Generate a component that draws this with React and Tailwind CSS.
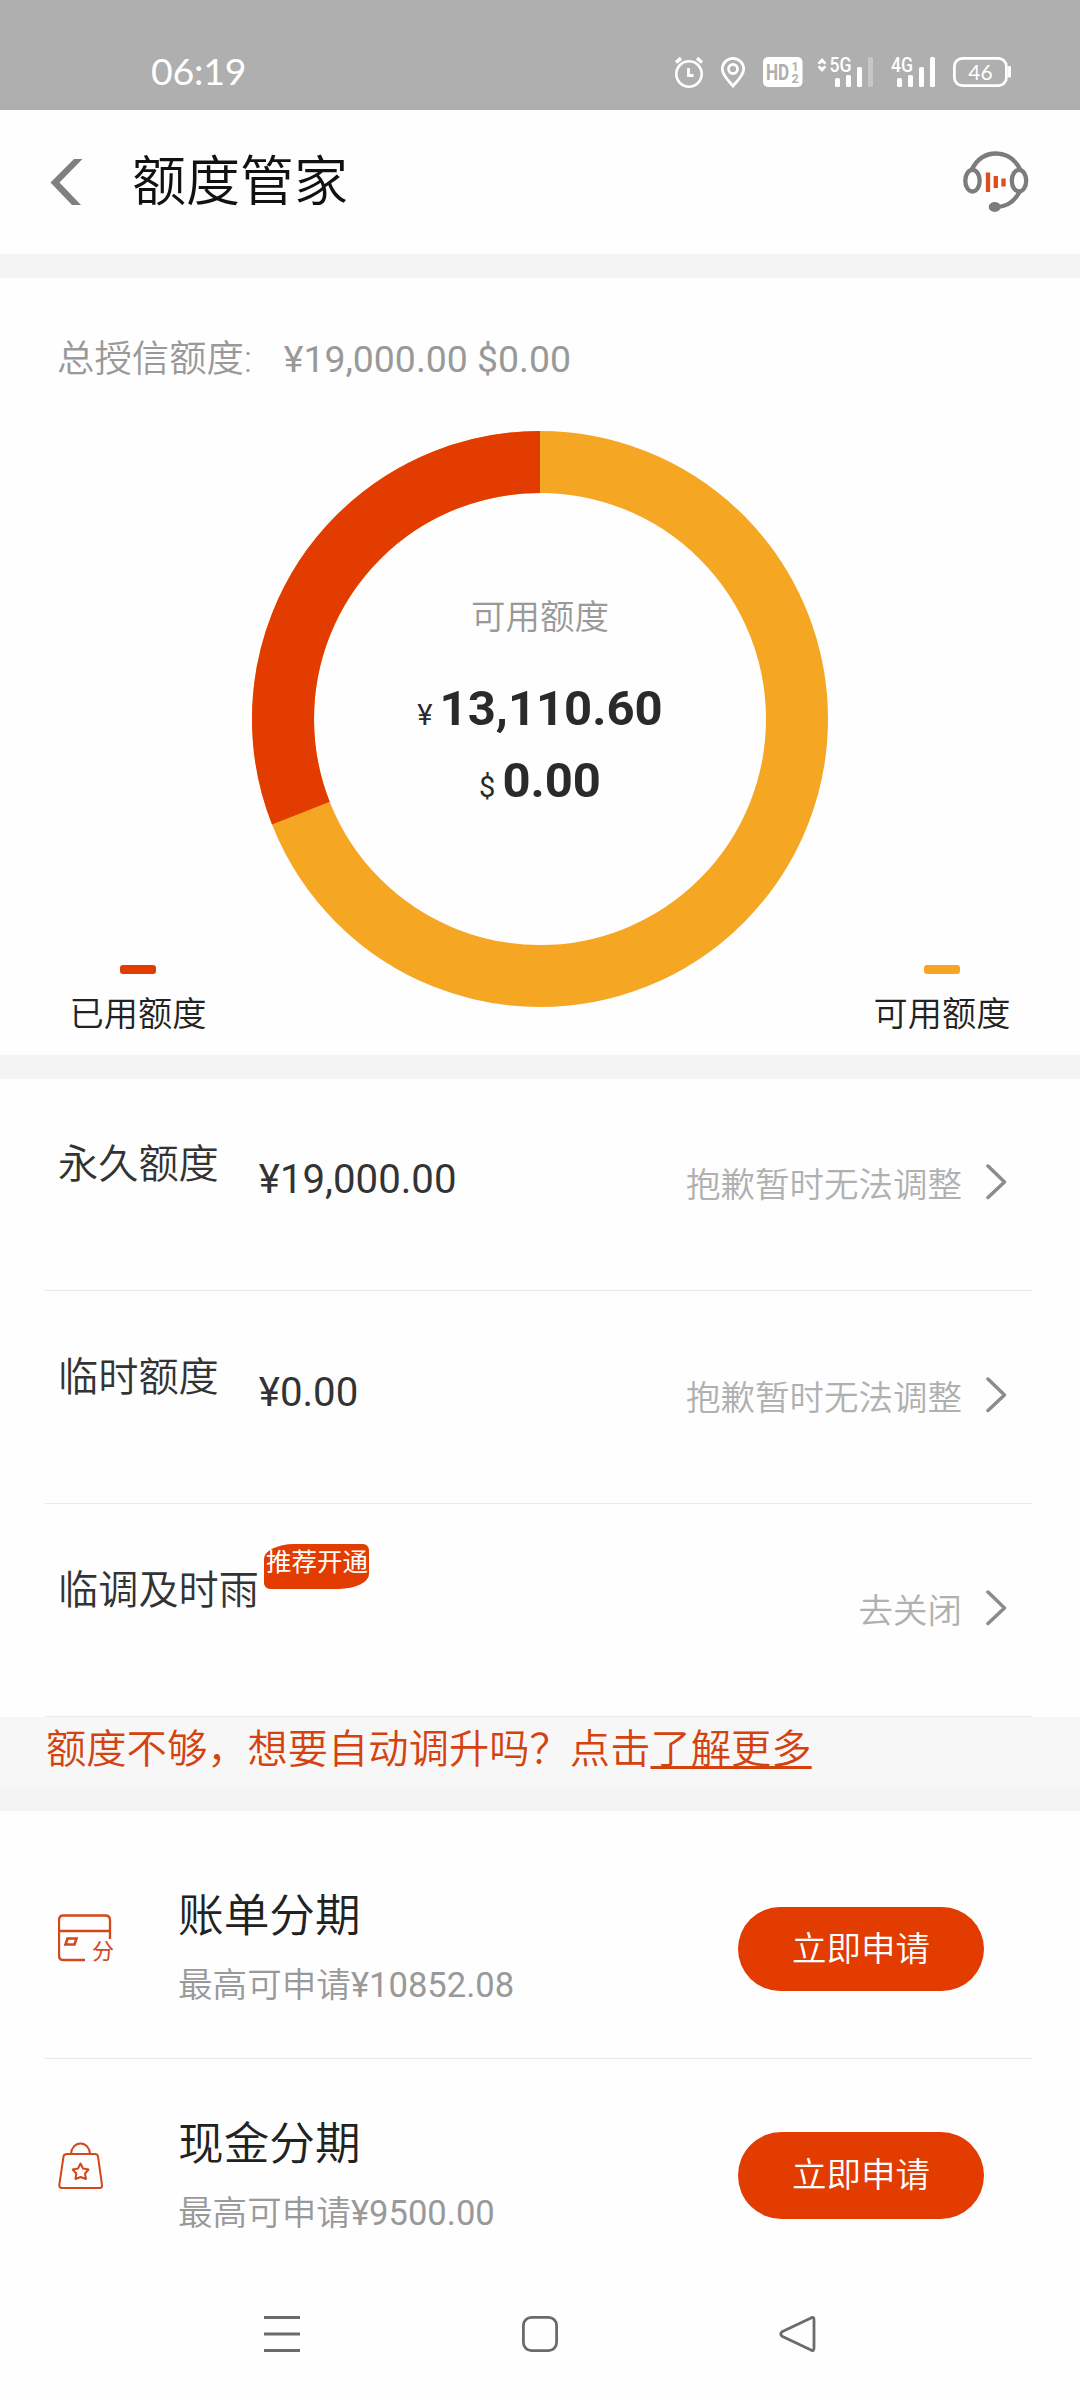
const TOTAL = 19000;
const AVAILABLE = 13110.6;

const limits = [
  { label: '永久额度', amount: '¥19,000.00', action: '抱歉暂时无法调整' },
  { label: '临时额度', amount: '¥0.00', action: '抱歉暂时无法调整' },
  { label: '临调及时雨', badge: '推荐开通', action: '去关闭' },
];

function StatusBar() {
  return (
    <div className="flex h-[110px] items-start bg-[#afafaf] text-white">
      <span className="ml-[151px] mt-[49px] w-[110px] font-['Lato'] text-[37.5px] leading-[44px] tracking-[-0.2px]">
        06:19
      </span>
      <div className="ml-[413px] mt-[56px] flex items-start">
        <svg width="30" height="33" viewBox="0 0 30 33" fill="none" stroke="white" strokeWidth="2.6">
          <circle cx="15" cy="18" r="12.7" />
          <path d="M2 6.5 7 2.2M28 6.5 23 2.2" strokeWidth="3.6" />
          <path d="M14.5 12v7.5h5" strokeWidth="2.8" />
        </svg>
        <svg className="ml-4" width="26" height="33" viewBox="0 0 26 33" fill="none" stroke="white">
          <path d="M13 30C9 25 2.3 19.5 2.3 13a10.7 10.7 0 0 1 21.4 0C23.7 19.5 17 25 13 30Z" strokeWidth="2.8" />
          <circle cx="13" cy="13" r="4.5" strokeWidth="2.8" />
        </svg>
        <svg className="ml-[17px]" width="40" height="33" viewBox="0 0 40 33">
          <rect x="0" y="1" width="39.5" height="30" rx="5" fill="white" />
          <g fill="#afafaf" className="font-['Roboto'] font-bold">
            <text transform="translate(3 24) scale(0.76 1)" fontSize="22.5">HD</text>
            <text x="28.5" y="14.5" fontSize="12.5">1</text>
            <text x="28.5" y="26.5" fontSize="12.5">2</text>
          </g>
        </svg>
        <svg className="ml-[14px] overflow-visible" width="58" height="33" viewBox="0 0 58 33" fill="white">
          <path d="M.5 7 5 2 9.5 7 7.5 8.5 5 6.5 2.5 8.5ZM.5 11 5 16 9.5 11 7.5 9.5 5 11.5 2.5 9.5Z" />
          <text x="12.5" y="15.5" fontSize="20" textLength="22" lengthAdjust="spacingAndGlyphs" className="font-['Roboto'] font-medium">5G</text>
          <rect x="18" y="22" width="5" height="9" rx="1.5" />
          <rect x="29" y="19" width="5" height="12" rx="1.5" />
          <rect x="40" y="11" width="5" height="20" rx="1.5" />
          <rect x="51" y="1" width="5" height="30" rx="1.5" opacity="0.3" />
        </svg>
        <svg className="ml-[16px] overflow-visible" width="46" height="33" viewBox="0 0 46 33" fill="white">
          <text x="0" y="15.5" fontSize="20" textLength="22" lengthAdjust="spacingAndGlyphs" className="font-['Roboto'] font-medium">4G</text>
          <rect x="6" y="22" width="5" height="9" rx="1.5" />
          <rect x="17" y="19" width="5" height="12" rx="1.5" />
          <rect x="28" y="11" width="5" height="20" rx="1.5" />
          <rect x="39" y="1" width="5" height="30" rx="1.5" />
        </svg>
        <svg className="ml-4" width="60" height="33" viewBox="0 0 60 33" fill="white">
          <rect x="1.4" y="2.3" width="52" height="27.4" rx="8" fill="none" stroke="white" strokeWidth="2.8" />
          <rect x="55" y="10" width="3" height="11.5" rx="1" />
          <text x="27.4" y="23.5" fontSize="21" textAnchor="middle" className="font-['Lato']">46</text>
        </svg>
      </div>
    </div>
  );
}

function Header() {
  return (
    <header className="flex h-36 items-center pl-[50px] pr-[51px]">
      <svg width="33" height="46" viewBox="0 0 33 46" fill="#808080">
        <path d="M24 0H32.5L9.5 23.5 31 46H22L.5 23.5Z" />
      </svg>
      <h1 className="ml-[49px] mt-px text-[54px] font-[350] leading-[60px] text-[#111]">额度管家</h1>
      <svg className="ml-auto" width="66" height="62" viewBox="0 0 66 62" fill="none" stroke="#7c7c7c" strokeWidth="4.3">
        <path d="M8.5 19C14 8 22 2.5 33 2.5S52 8 57.5 19" />
        <ellipse cx="9.5" cy="29.7" rx="7.2" ry="10.8" />
        <ellipse cx="56" cy="29.7" rx="7.2" ry="10.8" />
        <path d="M56.5 41C51 51 44 56 33 56" />
        <ellipse cx="31.7" cy="56" rx="6" ry="5" fill="#7c7c7c" stroke="none" />
        <path d="M25 21.5V41M32.8 25V37M40.5 27.5V35.5" stroke="#dc4e1c" />
      </svg>
    </header>
  );
}

function Donut() {
  const radius = 257;
  const length = 2 * Math.PI * radius;
  const available = (AVAILABLE / TOTAL) * length;

  return (
    <div className="relative size-[576px]">
      <svg viewBox="0 0 576 576" fill="none" strokeWidth="62" className="size-full -rotate-90">
        <circle cx="288" cy="288" r={radius} stroke="#f5a623" />
        <circle
          cx="288"
          cy="288"
          r={radius}
          stroke="#e23c00"
          strokeDasharray={`${length - available} ${available}`}
          strokeDashoffset={-available}
        />
      </svg>
      <div className="absolute inset-0 flex flex-col items-center pt-[168px] text-[#2a2a2a]">
        <p className="text-[34.5px] font-[350] leading-9 text-[#999]">可用额度</p>
        <p className="mt-[50px] flex items-baseline gap-[7px] leading-[48px]">
          <span className="text-[29px]">¥</span>
          <span className="text-[49px] font-bold">13,110.60</span>
        </p>
        <p className="mt-[18px] flex items-baseline gap-[7px] leading-[48px]">
          <span className="text-[29px]">$</span>
          <span className="text-[49px] font-bold">0.00</span>
        </p>
      </div>
    </div>
  );
}

function Chevron() {
  return (
    <svg className="ml-6 mt-[85px]" width="21" height="36" viewBox="0 0 21 36" fill="none" stroke="#8c8c8c" strokeWidth="3.5" strokeLinecap="round" strokeLinejoin="round">
      <path d="M2 2 18.5 18 2 33.5" />
    </svg>
  );
}

function LimitRow({ label, amount, badge, action }) {
  return (
    <div className="ml-[45px] mr-[48px] flex h-[213px] items-start border-b border-[#e9e9e9] pl-[13px] pr-[25px] pt-px first:h-[212px] first:pt-0">
      <span className="mt-[66px] text-[40.2px] font-[350] leading-10 text-[#333]">{label}</span>
      {amount && <span className="ml-[40px] mt-[81px] text-[40.2px] leading-10 text-[#333]">{amount}</span>}
      {badge && (
        <span className="ml-[5px] mt-[39px] h-[45px] w-[105px] whitespace-nowrap rounded-[6px] rounded-br-[30px_15px] rounded-tl-[30px_15px] bg-[#e23c00] pl-[2px] text-[25.5px] leading-[36px] text-white">
          {badge}
        </span>
      )}
      <span className="ml-auto mt-[88px] text-[34.5px] font-[350] leading-9 text-[#b0b0b0]">{action}</span>
      <Chevron />
    </div>
  );
}

function BillIcon() {
  return (
    <svg className="mt-[83px]" width="58" height="50" viewBox="0 0 58 50" fill="none" stroke="#d2481a" strokeWidth="2.3">
      <path d="M52 25V6Q52 1.500 47.5 1.5H5.500Q1 1.5 1 6V41.5Q1 46 5.5 46H27M1 17H52" />
      <path d="M9.5 24.5H18.5L16.5 30.5H7.5Z" strokeWidth="2.6" />
      <text x="34" y="45" fontSize="22" fill="#d2481a" stroke="none">分</text>
    </svg>
  );
}

function BagIcon() {
  return (
    <svg className="mt-[83px]" width="58" height="50" viewBox="0 0 58 50" fill="none" stroke="#d2481a" strokeWidth="2" strokeLinejoin="round">
      <path d="M9 12H37Q39.5 12 40 14.5L44 43Q44.5 46 41.5 46H4Q1 46 1.3 43L5.5 14.5Q6 12 9 12ZM13 12A9.5 10.5 0 0 1 32 12" />
      <path d="M22.5 21.5 25 26.5 30.5 27.5 27 31.5 28 37 22.5 35 17.5 37 18.3 31.5 14.7 27.5 20 26.5Z" />
    </svg>
  );
}

function InstallmentRow({ icon, title, hint, last }) {
  return (
    <div className={`ml-[45px] mr-[48px] flex h-[228px] items-start pl-[13px] pr-[48px] ${last ? '' : 'border-b border-[#e9e9e9]'}`}>
      {icon}
      <div className="ml-[62px] mt-[63px]">
        <h2 className="text-[45.7px] font-[350] leading-[46px] text-[#222]">{title}</h2>
        <p className="mt-[27px] text-[34.6px] leading-9 text-[#999]">
          <span className="font-[350]">最高可申请</span>
          {hint}
        </p>
      </div>
      <button
        type="button"
        className={`ml-auto w-[246px] rounded-[44px] bg-[#e23c00] text-[34.5px] font-[350] text-white ${last ? 'mt-[73px] h-[87px]' : 'mt-[76px] h-[84px] pt-0.5'}`}
      >
        立即申请
      </button>
    </div>
  );
}

function Legend({ color, label, className }) {
  return (
    <div className={`mt-[534px] flex w-[252px] flex-col items-center ${className}`}>
      <span className={`h-[9px] w-9 rounded-[3px] ${color}`} />
      <span className="mt-[22px] text-[34.2px] font-[350] leading-9 text-[#222]">{label}</span>
    </div>
  );
}

export default function App() {
  return (
    <main className="h-[2400px] w-[1080px] overflow-hidden bg-[#fefefe] font-['Roboto','Noto_Sans_CJK_SC',sans-serif]">
      <StatusBar />
      <Header />
      <div className="h-6 bg-[#f4f4f4]" />

      <section className="h-[777px] pt-[61px]">
        <p className="flex pl-[57px] text-[37.4px] leading-10 text-[#999]">
          <span className="font-[350]">总授信额度:</span>
          <span className="ml-[32px]">¥19,000.00 $0.00</span>
        </p>
        <div className="mt-[52px] flex items-start">
          <Legend color="bg-[#e23c00]" label="已用额度" className="pl-6" />
          <Donut />
          <Legend color="bg-[#f5a623]" label="可用额度" className="pr-6" />
        </div>
      </section>
      <div className="h-6 bg-[#f4f4f4]" />

      <section>
        {limits.map((limit) => (
          <LimitRow key={limit.label} {...limit} />
        ))}
      </section>

      <p className="h-[71px] bg-[#f7f7f7] pl-[46px] pt-[11px] text-[40.3px] font-[350] leading-[44px] text-[#d4430f]">
        额度不够，想要自动调升吗？点击
        <a className="underline decoration-[3px] underline-offset-[3px] [text-decoration-skip-ink:none]">了解更多</a>
      </p>
      <div className="h-[23px] bg-[#f4f4f4]" />

      <section className="pt-5">
        <InstallmentRow icon={<BillIcon />} title="账单分期" hint="¥10852.08" />
        <InstallmentRow icon={<BagIcon />} title="现金分期" hint="¥9500.00" last />
      </section>

      <nav className="flex justify-between pl-[263px] pr-[263px] pt-[28px]">
        <svg width="38" height="38" viewBox="0 0 38 38" stroke="#6b6b6b" strokeWidth="3.2">
          <path d="M1 2.5H37M1 19H37M1 35.5H37" />
        </svg>
        <svg width="38" height="38" viewBox="0 0 38 38" fill="none" stroke="#6b6b6b" strokeWidth="2.8">
          <rect x="2.4" y="2.4" width="33.2" height="33.2" rx="8" />
        </svg>
        <svg width="38" height="38" viewBox="0 0 38 38" fill="none" stroke="#6b6b6b" strokeWidth="2.8" strokeLinejoin="round">
          <path d="M31.5 3.2Q35 1 35 5V33Q35 37 31.5 34.8L3.5 21.5Q0 19 3.5 16.5Z" />
        </svg>
      </nav>
    </main>
  );
}
